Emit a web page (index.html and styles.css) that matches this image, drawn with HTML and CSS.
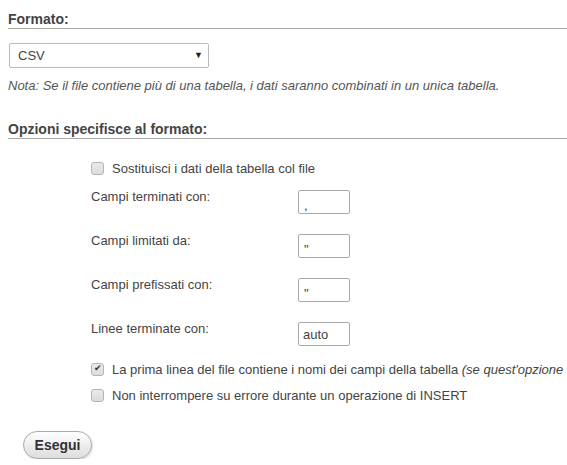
FILE: index.html
```html
<!DOCTYPE html>
<html lang="it">
<head>
    <meta charset="UTF-8">
    <title>Importa</title>
    <link rel="stylesheet" href="styles.css">
</head>
<body>
    <div class="page">
        <!-- Formato -->
        <div class="section">
            <h2 class="legend">Formato:</h2>
            <div class="select-box">
                <select class="format-select">
                    <option>CSV</option>
                </select>
                <span class="arrow">&#9660;</span>
            </div>
            <p class="note">Nota: Se il file contiene più di una tabella, i dati saranno combinati in un unica tabella.</p>
        </div>

        <!-- Opzioni -->
        <div class="section">
            <h2 class="legend">Opzioni specifisce al formato:</h2>
            <div class="options">
                <label class="check-row">
                    <input type="checkbox" class="check">
                    <span>Sostituisci i dati della tabella col file</span>
                </label>

                <div class="field-row">
                    <label class="field-label">Campi terminati con:</label>
                    <input type="text" class="field-input" value=",">
                </div>
                <div class="field-row">
                    <label class="field-label">Campi limitati da:</label>
                    <input type="text" class="field-input" value="&quot;">
                </div>
                <div class="field-row">
                    <label class="field-label">Campi prefissati con:</label>
                    <input type="text" class="field-input" value="&quot;">
                </div>
                <div class="field-row">
                    <label class="field-label">Linee terminate con:</label>
                    <input type="text" class="field-input auto" value="auto">
                </div>

                <label class="check-row first">
                    <input type="checkbox" class="check" checked>
                    <span>La prima linea del file contiene i nomi dei campi della tabella <i>(se quest'opzione</i></span>
                </label>
                <label class="check-row">
                    <input type="checkbox" class="check">
                    <span>Non interrompere su errore durante un operazione di INSERT</span>
                </label>
            </div>
        </div>

        <div class="actions">
            <button class="btn">Esegui</button>
        </div>
    </div>
</body>
</html>
```

FILE: styles.css
```css
/* Reset */
* {
    box-sizing: border-box;
}

html, body {
    margin: 0;
    padding: 0;
    background: #fff;
    overflow: hidden;
}

body {
    font-family: 'Liberation Sans', Arial, sans-serif;
    font-size: 13px;
    color: #444;
}

.page {
    padding: 11px 0 0 8px;
}

/* Section headings */
.legend {
    margin: 0;
    padding-bottom: 1px;
    font-size: 14px;
    font-weight: bold;
    line-height: 16px;
    color: #444;
    border-bottom: 1px solid #aaa;
}

/* Format select */
.select-box {
    position: relative;
    width: 200px;
    margin: 14px 0 0 1px;
}

.format-select {
    -webkit-appearance: none;
    appearance: none;
    width: 200px;
    height: 25px;
    padding: 0 8px;
    font-family: inherit;
    font-size: 13px;
    color: #444;
    background: #fff;
    border: 1px solid #bbb;
    border-radius: 2px;
}

.select-box .arrow {
    position: absolute;
    right: 6px;
    top: 7px;
    font-size: 9px;
    color: #222;
    pointer-events: none;
}

.note {
    margin: 10px 0 0;
    font-size: 13px;
    font-style: italic;
    line-height: 15px;
    color: #555;
}

.section + .section {
    margin-top: 28px;
}

/* Options */
.options {
    padding: 22px 0 0 83px;
}

.check-row {
    display: flex;
    align-items: center;
    white-space: nowrap;
    line-height: 15px;
}

.check {
    -webkit-appearance: none;
    appearance: none;
    width: 13px;
    height: 13px;
    margin: 0 8px 0 0;
    flex: none;
    border: 1px solid #b5b5b5;
    border-radius: 3px;
    background: linear-gradient(#eaeaea, #dcdcdc);
    position: relative;
}

.check:checked::after {
    content: '\2714';
    position: absolute;
    left: 2px;
    top: -1px;
    font-size: 9px;
    color: #333;
}

.field-row {
    display: flex;
    align-items: flex-start;
    margin-top: 14px;
}

.field-row + .field-row {
    margin-top: 20px;
}

.field-label {
    width: 207px;
    margin-top: -1px;
    line-height: 15px;
}

.field-input {
    width: 52px;
    height: 24px;
    padding: 7px 5px 0;
    font-family: inherit;
    font-size: 13px;
    color: #444;
    border: 1px solid #aaa;
    border-radius: 2px;
    background: #fff;
}

.field-input.auto {
    padding: 0 4px;
}

.check-row.first {
    margin-top: 16px;
}

.check-row + .check-row {
    margin-top: 11px;
}

/* Submit */
.actions {
    margin: 28px 0 0 15px;
}

.btn {
    width: 69px;
    height: 28px;
    padding: 0;
    font-family: inherit;
    font-size: 14px;
    font-weight: bold;
    color: #333;
    border: 1px solid #aaa;
    border-radius: 14px;
    background: linear-gradient(#fff, #ddd);
    box-shadow: 1px 1px 2px rgba(0,0,0,0.15);
    cursor: pointer;
}
```
